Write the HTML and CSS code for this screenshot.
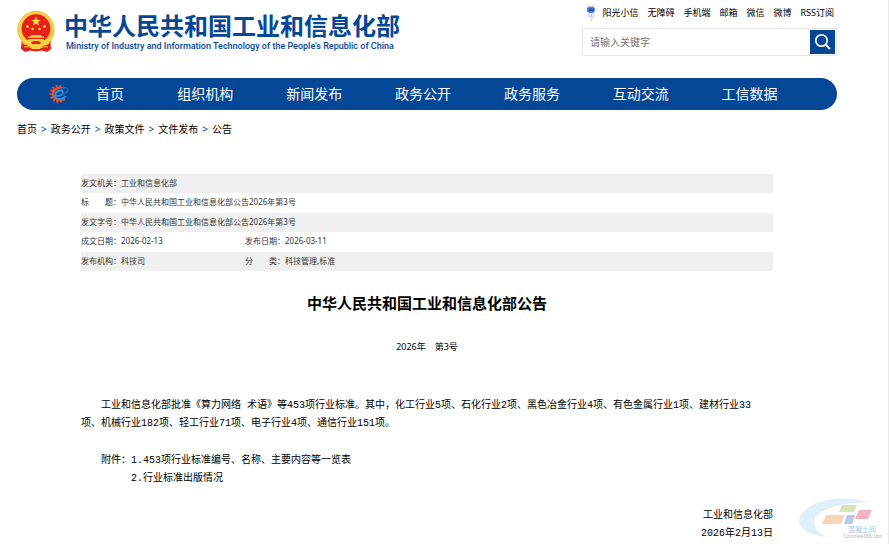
FILE: index.html
```html
<!DOCTYPE html>
<html lang="zh-CN">
<head>
<meta charset="utf-8">
<title>中华人民共和国工业和信息化部公告</title>
<link rel="stylesheet" href="styles.css">
</head>
<body>
<div class="page">
  <header class="header">
    <a class="brand" href="#">
      <svg class="emblem" viewBox="0 0 38 41" aria-hidden="true">
        <path d="M5 26H33L34 38 30 41 25 39.500 19 40.500 13 39.500 8 41 4 38Z" fill="#e3201b"/>
        <circle cx="19" cy="18.500" r="18.500" fill="#eeb02a"/>
        <circle cx="19" cy="18.500" r="16.300" fill="none" stroke="#fbd348" stroke-width="2.600"/>
        <circle cx="19" cy="17.500" r="14.300" fill="#e6201b"/>
        <path d="M19 5.500l1.300 3.200 3.400.2-2.600 2.200.9 3.300-3-1.800-3 1.800.9-3.300-2.600-2.200 3.400-.2z" fill="#ffdf3e"/>
        <g fill="#ffdf3e"><circle cx="10.500" cy="15.500" r="1.300"/><circle cx="15.500" cy="18" r="1.200"/><circle cx="22.500" cy="18" r="1.200"/><circle cx="27.500" cy="15.500" r="1.300"/></g>
        <path d="M14 24h10l1 1.500h2V27H11v-1.500h2z" fill="#f7c52f"/>
        <path d="M5 29q5 1 8-1h12q3 2 8 1l-1 4q-3 1-6 0l-3 5h-8l-3-5q-3 1-6 0z" fill="#ffd33b"/>
        <path d="M14 31q5-2 10 0l-1 2h-8z" fill="#e6201b"/>
        <path d="M7 36q5-1 8 1M31 36q-5-1-8 1" fill="none" stroke="#f9c52e" stroke-width="1"/>
      </svg>
      <span class="brand-text">
        <span class="brand-name">中华人民共和国工业和信息化部</span>
        <span class="brand-en">Ministry of Industry and Information Technology of the People's Republic of China</span>
      </span>
    </a>
    <div class="tools">
      <nav class="quick" aria-label="快捷入口">
        <a href="#" class="mascot-link"><svg class="mascot" viewBox="0 0 10 16" aria-hidden="true">
          <path d="M2 7h6l1.500 4L7 14.500H3.500L.5 11z" fill="#e3ebf7"/>
          <path d="M1 3l2-1.500h4L9 3v3.500L7 8H3L1 6.500z" fill="#5c86dc"/>
          <path d="M2.500 3.500h5v3h-5z" fill="#2450b4"/>
          <path d="M4.500 9h1.500v3H4.500z" fill="#b9cdec"/>
          <path d="M1 0h2v1.500H1zM6.500 0h2v1.500h-2zM4.500 14.500h2V16h-2z" fill="#f3d98a"/>
        </svg>阳光小信</a>
        <a href="#">无障碍</a>
        <a href="#">手机端</a>
        <a href="#">邮箱</a>
        <a href="#">微信</a>
        <a href="#">微博</a>
        <a href="#">RSS订阅</a>
      </nav>
      <form class="search">
        <input type="text" placeholder="请输入关键字" aria-label="请输入关键字">
        <button type="button" aria-label="搜索"><svg viewBox="0 0 25 24" aria-hidden="true"><circle cx="11.500" cy="10.500" r="5.700" fill="none" stroke="#fff" stroke-width="1.700"/><path d="M15.700 14.700l4.300 4.300" stroke="#fff" stroke-width="1.900"/></svg></button>
      </form>
    </div>
  </header>

  <nav class="menu" aria-label="主导航">
    <svg class="gear" viewBox="0 0 20 20" aria-hidden="true">
      <path d="M15 4.500A7.600 7.600 0 1 0 16 14" fill="none" stroke="#e8452a" stroke-width="2.800" stroke-dasharray="2 1.400"/>
      <path d="M13.500 5A6 6 0 1 0 14.500 14" fill="none" stroke="#f04e28" stroke-width="2.600"/>
      <path d="M6 11.500q5.500 1 7.500-1.500 1.500-3-1.500-3.500-5 0-6 4.500 0 4 4.500 4.500 4 0 6-3.500" fill="none" stroke="#2d8fdc" stroke-width="1.800"/>
      <path d="M11 5.500q5-3 8-.5 0 3.500-5.500 6" fill="none" stroke="#1f66b8" stroke-width="1.500"/>
    </svg>
    <a class="home" href="#">首页</a>
    <a href="#">组织机构</a>
    <a href="#">新闻发布</a>
    <a href="#">政务公开</a>
    <a href="#">政务服务</a>
    <a href="#">互动交流</a>
    <a href="#">工信数据</a>
  </nav>

  <nav class="crumbs" aria-label="当前位置">
    <a href="#">首页</a><span>&gt;</span><a href="#">政务公开</a><span>&gt;</span><a href="#">政策文件</a><span>&gt;</span><a href="#">文件发布</a><span>&gt;</span><a href="#">公告</a>
  </nav>

  <main class="document">
    <table class="meta">
      <tbody>
        <tr><th scope="row">发文机关：</th><td colspan="3">工业和信息化部</td></tr>
        <tr><th scope="row">标　　题：</th><td colspan="3">中华人民共和国工业和信息化部公告2026年第3号</td></tr>
        <tr><th scope="row">发文字号：</th><td colspan="3">中华人民共和国工业和信息化部公告2026年第3号</td></tr>
        <tr><th scope="row">成文日期：</th><td class="first">2026-02-13</td><th scope="row">发布日期：</th><td>2026-03-11</td></tr>
        <tr><th scope="row">发布机构：</th><td class="first">科技司</td><th scope="row">分　　类：</th><td>科技管理,标准</td></tr>
      </tbody>
    </table>
    <h1>中华人民共和国工业和信息化部公告</h1>
    <p class="number">2026年　第3号</p>
    <div class="content">
      <p class="indent">工业和信息化部批准《算力网络 术语》等453项行业标准。其中，化工行业5项、石化行业2项、黑色冶金行业4项、有色金属行业1项、建材行业33<br>项、机械行业182项、轻工行业71项、电子行业4项、通信行业151项。</p>
      <div class="attach">
        <span>附件：</span>
        <p>1.453项行业标准编号、名称、主要内容等一览表<br>2.行业标准出版情况</p>
      </div>
      <p class="sign">工业和信息化部<br>2026年2月13日</p>
    </div>
  </main>
</div>

<svg class="watermark" viewBox="0 0 84 46" aria-hidden="true">
  <path d="M70 5Q42-3 18 6-6 18 4 31q8 8 26 9Q13 33 17 21 26 7 70 5z" fill="#e0f0fa"/>
  <path d="M44 8h15l-3 7H41z" fill="#d5e5b5"/>
  <path d="M61 13h13l-4 9H57z" fill="#f1b4bf"/>
  <path d="M28 18h19l-4 9H24z" fill="#f9d5b8"/>
  <path d="M49 18h8l-3 9h-8z" fill="#b8c9e5"/>
  <text x="50" y="35" class="wm-name">混凝土网</text>
  <text x="45" y="41" class="wm-url">Concrete365.com</text>
</svg>
</body>
</html>
```
FILE: styles.css
```css
* { box-sizing: border-box; }

body {
  margin: 0;
  background: #fff;
  color: #000;
  font-family: "Noto Sans", "Noto Sans CJK SC", sans-serif;
  font-size: 10px;
}

a { color: inherit; text-decoration: none; }
p, h1 { margin: 0; }

.page {
  min-height: 100vh;
  padding: 0 51px 0 17px;
  border-right: 1px solid #e8e8e8;
}

.header {
  display: flex;
  justify-content: space-between;
  height: 78px;
}

.brand {
  display: flex;
  gap: 9px;
  padding-top: 11px;
  color: #054797;
}

.emblem { width: 38px; height: 41px; }
.brand-text { display: flex; flex-direction: column; white-space: nowrap; }
.brand-name { font-size: 24px; font-weight: 700; line-height: 29px; }
.brand-en { padding-left: 2px; font-family: Roboto, sans-serif; font-size: 9px; font-weight: 500; line-height: 12px; }

.tools { width: 255px; }

.quick {
  display: flex;
  justify-content: flex-end;
  gap: 9px;
  height: 28px;
  padding-right: 3px;
  font-size: 9px;
  line-height: 26px;
  white-space: nowrap;
}

.mascot-link { display: flex; align-items: center; gap: 6px; height: 26px; }
.mascot { width: 10px; height: 16px; }

.search {
  display: flex;
  height: 28px;
  padding: 1px;
  border: 1px solid #e8e8e8;
}

.search input {
  flex: 1;
  min-width: 0;
  padding: 0 6px;
  border: 0;
  outline: 0;
  background: transparent;
  font: inherit;
}

.search input::placeholder { color: #757575; }

.search button {
  width: 25px;
  height: 24px;
  padding: 0;
  border: 0;
  background: #054797;
}

.search svg { display: block; width: 25px; height: 24px; }

.menu {
  display: flex;
  align-items: center;
  height: 32px;
  padding: 0 33px 0 32px;
  border-radius: 16px;
  background: #054797;
  color: #fff;
  font-size: 14px;
  line-height: 32px;
  white-space: nowrap;
}

.gear { width: 20px; height: 20px; }
.menu a { flex: 109; text-align: center; }
.menu .home { flex: 82; }

.crumbs {
  display: flex;
  gap: 4px;
  padding-top: 10px;
  line-height: 18px;
}

.crumbs span { color: #054797; }

.document { padding: 36px 64px 0; }

.meta {
  width: 100%;
  border-collapse: collapse;
  color: #333;
  font-size: 8px;
  line-height: 18px;
}

.meta tr { height: 20px; }
.meta tr:nth-child(odd) { height: 19px; background: #f0f0f0; }
.meta th, .meta td { padding: 0; text-align: left; vertical-align: top; font-weight: 400; }
.meta th { width: 40px; white-space: nowrap; }
.meta .first { width: 124px; }

h1 {
  padding-top: 20px;
  font-size: 15px;
  line-height: 24px;
  text-align: center;
}

.number {
  padding-top: 23px;
  font-size: 9px;
  line-height: 18px;
  text-align: center;
}

.content {
  display: flex;
  flex-direction: column;
  gap: 19px;
  padding-top: 41px;
  font-family: "Liberation Mono", "Noto Sans CJK SC", monospace;
  line-height: 18px;
}

.indent { text-indent: 2em; }
.attach { display: flex; padding-left: 20px; }
.sign { text-align: right; }

.watermark {
  position: absolute;
  right: 7px;
  bottom: 1px;
  width: 84px;
  height: 46px;
}

.wm-name { fill: #a9c6e4; font-family: "Noto Sans CJK SC", sans-serif; font-size: 7px; }
.wm-url { fill: #b5b5b5; font-family: "Liberation Sans", sans-serif; font-size: 5px; }
```
